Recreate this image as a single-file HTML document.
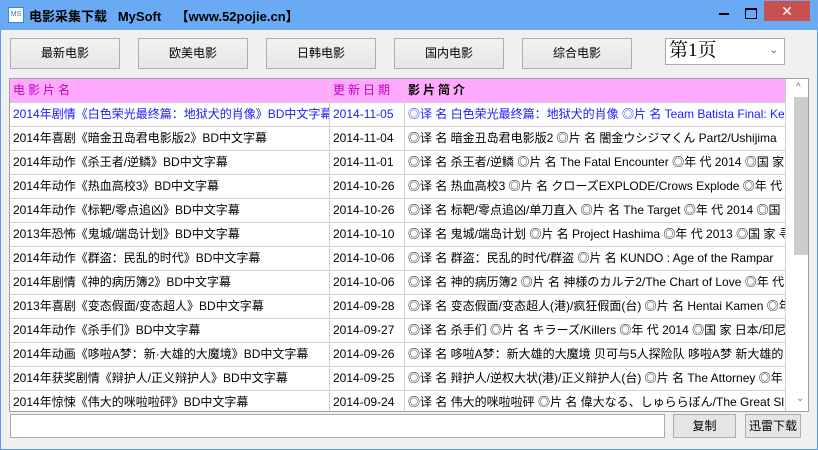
<html><head><style>
body{margin:0;width:818px;height:450px;background:#f0f0f0;font-family:"Liberation Sans","Noto Sans CJK SC",sans-serif;font-size:12px;position:relative;overflow:hidden}
.win{position:absolute;left:0;top:0;width:816px;height:448px;border:1px solid #5a9ae8;}
.title{position:absolute;left:0;top:0;width:818px;height:30px;background:#6aaaf4}
.title .t{position:absolute;left:29px;top:6px;font-size:13px;font-weight:bold;color:#000;white-space:pre}
.ico{position:absolute;left:8px;top:7px;width:16px;height:16px;background:#fff;border:1px solid #3a8ad0;box-sizing:border-box;font-size:7px;color:#2a7ac0;line-height:14px;text-align:center}
.close{position:absolute;left:764px;top:1px;width:46px;height:20px;background:#c75050;color:#fff;text-align:center;font-size:14px;line-height:20px}
.btn{position:absolute;top:38px;width:110px;height:31px;border:1px solid #adadad;box-sizing:border-box;background:linear-gradient(#f2f2f2,#e6e6e6);text-align:center;line-height:29px;font-size:12px}
.combo{position:absolute;left:665px;top:38px;width:120px;height:27px;background:#fff;border:1px solid #aaa;box-sizing:border-box;font-family:"Liberation Serif","Noto Serif CJK SC",serif;font-size:19px;line-height:24px;padding-left:3px}
.tbl{position:absolute;left:9px;top:78px;width:800px;height:334px;border:1px solid #a0a0a0;box-sizing:border-box;background:#fff;overflow:hidden}
.row{position:absolute;left:0;height:24px;width:776px;border-bottom:1px solid #d0d0d0;box-sizing:border-box;white-space:nowrap}
.row div{position:absolute;top:0;height:23px;line-height:23px;overflow:hidden;padding-left:3px;box-sizing:border-box;border-right:1px solid #d0d0d0}
.c1{left:0;width:320px}.c2{left:320px;width:75px}.c3{left:395px;width:381px}
.hd{background:#ffaaff;top:0}
.hd .c1,.hd .c2{color:#c000c0;letter-spacing:3px}.hd .c3{font-weight:bold;letter-spacing:3px}
.blue div{color:#1a1aff}
.sb{position:absolute;left:776px;top:0;width:22px;height:332px;background:#fff}
.thumb{position:absolute;left:8px;top:18px;width:14px;height:158px;background:#cdcdcd}
.bb{position:absolute;top:414px;height:24px;border:1px solid #adadad;box-sizing:border-box;background:#e5e5e5;text-align:center;line-height:22px}
</style></head><body>
<div class="win"></div>
<div class="title"><div class="ico">MS</div><div class="t">电影采集下载   MySoft    【www.52pojie.cn】</div>
<div style="position:absolute;left:719px;top:13px;width:10px;height:2px;background:#000"></div>
<div style="position:absolute;left:745px;top:8px;width:10px;height:8px;border:1px solid #000;border-top-width:2px"></div>
<div class="close">✕</div></div>
<div class="btn" style="left:10px">最新电影</div>
<div class="btn" style="left:138px">欧美电影</div>
<div class="btn" style="left:266px">日韩电影</div>
<div class="btn" style="left:394px">国内电影</div>
<div class="btn" style="left:522px">综合电影</div>
<div class="combo">第1页<span style="position:absolute;right:6px;top:0;font-size:10px;color:#555">⌄</span></div>
<div class="tbl">
<div class="row hd"><div class="c1">电影片名</div><div class="c2">更新日期</div><div class="c3">影片简介</div></div>
<div class="row blue" style="top:24px"><div class="c1">2014年剧情《白色荣光最终篇：地狱犬的肖像》BD中文字幕</div><div class="c2">2014-11-05</div><div class="c3">◎译 名 白色荣光最终篇：地狱犬的肖像 ◎片 名 Team Batista Final: Ke</div></div>
<div class="row" style="top:48px"><div class="c1">2014年喜剧《暗金丑岛君电影版2》BD中文字幕</div><div class="c2">2014-11-04</div><div class="c3">◎译 名 暗金丑岛君电影版2 ◎片 名 闇金ウシジマくん Part2/Ushijima</div></div>
<div class="row" style="top:72px"><div class="c1">2014年动作《杀王者/逆鳞》BD中文字幕</div><div class="c2">2014-11-01</div><div class="c3">◎译 名 杀王者/逆鳞 ◎片 名 The Fatal Encounter ◎年 代 2014 ◎国 家</div></div>
<div class="row" style="top:96px"><div class="c1">2014年动作《热血高校3》BD中文字幕</div><div class="c2">2014-10-26</div><div class="c3">◎译 名 热血高校3 ◎片 名 クローズEXPLODE/Crows Explode ◎年 代</div></div>
<div class="row" style="top:120px"><div class="c1">2014年动作《标靶/零点追凶》BD中文字幕</div><div class="c2">2014-10-26</div><div class="c3">◎译 名 标靶/零点追凶/单刀直入 ◎片 名 The Target ◎年 代 2014 ◎国</div></div>
<div class="row" style="top:144px"><div class="c1">2013年恐怖《鬼城/端岛计划》BD中文字幕</div><div class="c2">2014-10-10</div><div class="c3">◎译 名 鬼城/端岛计划 ◎片 名 Project Hashima ◎年 代 2013 ◎国 家 寻</div></div>
<div class="row" style="top:168px"><div class="c1">2014年动作《群盗：民乱的时代》BD中文字幕</div><div class="c2">2014-10-06</div><div class="c3">◎译 名 群盗：民乱的时代/群盗 ◎片 名 KUNDO : Age of the Rampar</div></div>
<div class="row" style="top:192px"><div class="c1">2014年剧情《神的病历簿2》BD中文字幕</div><div class="c2">2014-10-06</div><div class="c3">◎译 名 神的病历簿2 ◎片 名 神様のカルテ2/The Chart of Love ◎年 代</div></div>
<div class="row" style="top:216px"><div class="c1">2013年喜剧《变态假面/变态超人》BD中文字幕</div><div class="c2">2014-09-28</div><div class="c3">◎译 名 变态假面/变态超人(港)/疯狂假面(台) ◎片 名 Hentai Kamen ◎年</div></div>
<div class="row" style="top:240px"><div class="c1">2014年动作《杀手们》BD中文字幕</div><div class="c2">2014-09-27</div><div class="c3">◎译 名 杀手们 ◎片 名 キラーズ/Killers ◎年 代 2014 ◎国 家 日本/印尼</div></div>
<div class="row" style="top:264px"><div class="c1">2014年动画《哆啦A梦：新·大雄的大魔境》BD中文字幕</div><div class="c2">2014-09-26</div><div class="c3">◎译 名 哆啦A梦：新大雄的大魔境 贝可与5人探险队 哆啦A梦 新大雄的</div></div>
<div class="row" style="top:288px"><div class="c1">2014年获奖剧情《辩护人/正义辩护人》BD中文字幕</div><div class="c2">2014-09-25</div><div class="c3">◎译 名 辩护人/逆权大状(港)/正义辩护人(台) ◎片 名 The Attorney ◎年</div></div>
<div class="row" style="top:312px"><div class="c1">2014年惊悚《伟大的咪啦啦砰》BD中文字幕</div><div class="c2">2014-09-24</div><div class="c3">◎译 名 伟大的咪啦啦砰 ◎片 名 偉大なる、しゅららぼん/The Great Sl</div></div>
<div class="sb"><div style="position:absolute;left:10px;top:3px;color:#777;font-size:10px">^</div><div class="thumb"></div><div style="position:absolute;left:10px;top:314px;color:#777;font-size:10px">⌄</div></div>
</div>
<div style="position:absolute;left:10px;top:414px;width:655px;height:24px;background:#fff;border:1px solid #aaa;box-sizing:border-box"></div>
<div class="bb" style="left:673px;width:63px">复制</div>
<div class="bb" style="left:745px;width:56px">迅雷下载</div>
</body></html>
